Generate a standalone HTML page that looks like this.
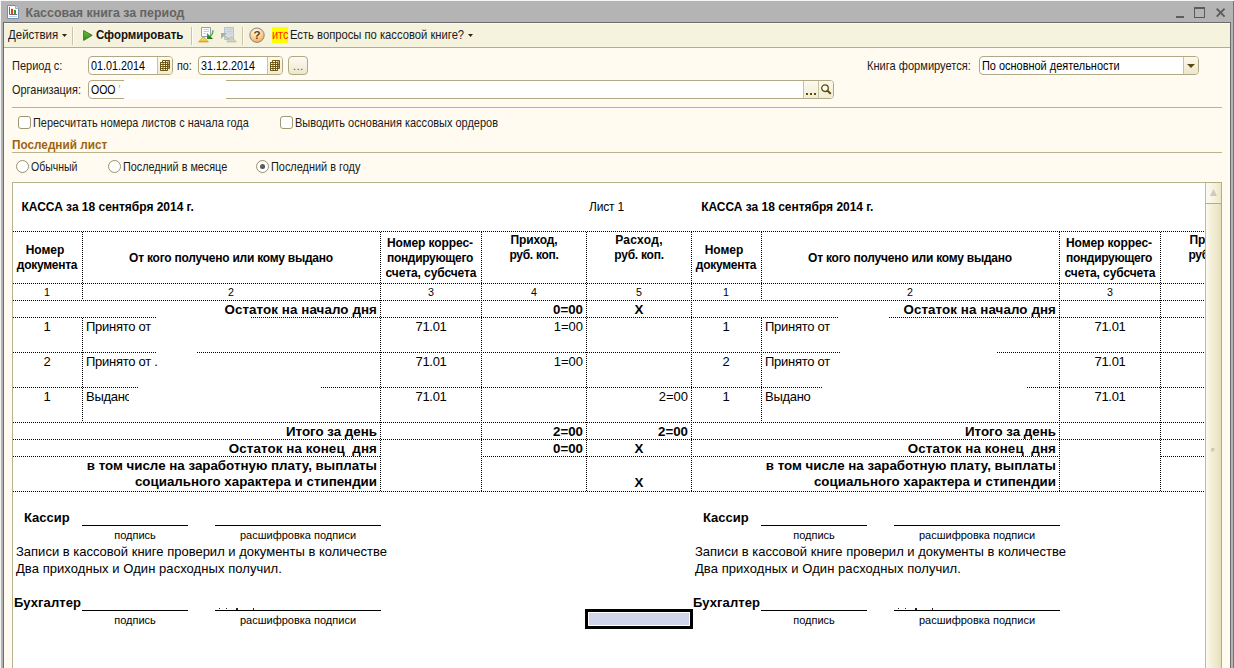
<!DOCTYPE html>
<html lang="ru">
<head>
<meta charset="utf-8">
<title>Кассовая книга за период</title>
<style>
html,body{margin:0;padding:0;}
body{width:1234px;height:668px;overflow:hidden;background:#b4b4b4;position:relative;font-family:"Liberation Sans",sans-serif;font-size:11px;color:#101010;}
.a{position:absolute;white-space:nowrap;line-height:1;}
.ui{font-size:11px;color:#1a1a1a;}
.b{font-weight:bold;}
#frameL{left:0;top:0;width:1px;height:668px;background:#f4f4f4;}
#frameT{left:0;top:0;width:1234px;height:1px;background:#f4f4f4;}
#client{left:3px;top:22px;width:1226px;height:660px;border:1px solid #6c6c6c;background:#fffbf0;}
#toolbar{left:4px;top:23px;width:1226px;height:24px;background:#f5f2dd;border-bottom:1px solid #b4ad85;box-shadow:inset 0 1px 0 #fbfaf0;}
.sep{width:1px;background:#c9c4a6;box-shadow:1px 0 0 #fffef6;}
.hl{height:1px;background:#b9b28e;}
.inp{background:#fff;border:1px solid #b0a983;border-radius:4px;box-sizing:border-box;}
.btn{background:linear-gradient(#fdfcf4,#ece7cb);border:1px solid #b0a983;border-radius:4px;box-sizing:border-box;}
.chk{width:13px;height:13px;box-sizing:border-box;border:1px solid #9f9870;border-radius:3px;background:#fff;}
.rad{width:13px;height:13px;box-sizing:border-box;border:1px solid #9a9369;border-radius:50%;background:#fff;}
#sheet{left:12px;top:182px;width:1193px;height:500px;background:#fff;border:1px solid #b9b28e;border-right:none;box-sizing:border-box;overflow:hidden;}
.sh{font-family:"Liberation Sans",sans-serif;color:#000;}
.dh{height:1px;background-image:repeating-linear-gradient(90deg,#000 0,#000 1px,transparent 1px,transparent 2px);}
.dv{width:1px;background-image:repeating-linear-gradient(180deg,#000 0,#000 1px,transparent 1px,transparent 2px);}
.c{text-align:center;}
.r{text-align:right;}
.sl{height:1px;background:#000;}
</style>
</head>
<body>
<!-- window frame -->
<div class="a" id="client"></div>
<div class="a" id="frameL"></div>
<div class="a" id="frameT"></div>
<!-- title bar -->
<svg class="a" style="left:7px;top:5px" width="12" height="14" viewBox="0 0 12 14">
<path d="M0.5 0.5H8.5L11.5 3.5V13.5H0.5Z" fill="#fff" stroke="#6f8fb0" stroke-width="1"/>
<path d="M8.5 0.5V3.5H11.5" fill="#dfeaf5" stroke="#8fb0d0" stroke-width="1"/>
<path d="M2.5 2V9.5H10" fill="none" stroke="#7a6a6a" stroke-width="1"/>
<rect x="4" y="3.8" width="2" height="5.2" fill="#ee3420"/>
<rect x="7" y="4.9" width="2" height="4.1" fill="#2f9e1e"/>
<rect x="2" y="11" width="8" height="1" fill="#b4d2ea"/>
</svg>
<div class="a b" id="t_title" style="left:25.5px;top:6px;font-size:12.4px;line-height:14px;color:#646464;letter-spacing:0px">Кассовая книга за период</div>
<div class="a" style="left:1176px;top:16px;width:8px;height:2px;background:#5e5e5e"></div>
<div class="a" style="left:1194px;top:7px;width:11px;height:11px;box-sizing:border-box;border:1px solid #5a5a5a;border-top-width:2px"></div>
<svg class="a" style="left:1215px;top:7px" width="11" height="11" viewBox="0 0 11 11"><path d="M1.7 1.7L9.6 9.6M9.6 1.7L1.7 9.6" stroke="#5c5c5c" stroke-width="1.9" fill="none"/></svg>
<div class="a" style="left:1231px;top:1px;width:3px;height:667px;background:#b4b4b4"></div>
<div class="a" style="left:1233px;top:1px;width:1px;height:667px;background:#747474"></div>

<!-- toolbar -->
<div class="a" id="toolbar"></div>
<div class="a ui" id="t_act" style="top:29px;line-height:13px;left:8.00px;font-size:12.4px;transform:scaleX(0.9245);transform-origin:0 0">Действия</div>
<svg class="a" style="left:62px;top:34px" width="5" height="3" viewBox="0 0 5 3"><path d="M0 0H5L2.5 3Z" fill="#33260a"/></svg>
<div class="a sep" style="left:72px;top:27px;height:18px"></div>
<svg class="a" style="left:83px;top:30px" width="10" height="11" viewBox="0 0 10 11"><defs><linearGradient id="pg" x1="0" y1="0" x2="0" y2="1"><stop offset="0" stop-color="#6cc22e"/><stop offset="1" stop-color="#2e8c1c"/></linearGradient></defs><path d="M0.6 0.6L9.2 5.3L0.6 10.4Z" fill="url(#pg)" stroke="#3c6e2a" stroke-width="0.9"/></svg>
<div class="a ui b" id="t_form" style="top:29px;line-height:13px;color:#111;left:96.08px;font-size:12.4px;transform:scaleX(0.9247);transform-origin:0 0">Сформировать</div>
<div class="a sep" style="left:191px;top:27px;height:18px"></div>
<svg class="a" style="left:198px;top:26px" width="17" height="18" viewBox="0 0 17 18">
<defs><linearGradient id="yg" x1="0" y1="0" x2="0" y2="1"><stop offset="0" stop-color="#e8b838"/><stop offset="0.6" stop-color="#f6e05c"/><stop offset="1" stop-color="#d89c1c"/></linearGradient>
<linearGradient id="gg" x1="0" y1="0" x2="1" y2="1"><stop offset="0" stop-color="#4fb030"/><stop offset="1" stop-color="#145c08"/></linearGradient></defs>
<path d="M3.5 1.5H12.5V10.5H3.5Z" fill="#fdfeff" stroke="#8aa2bc"/>
<path d="M5.5 3.5H11M5.5 5.5H11M5.5 7.5H8" stroke="#c3cfdf" stroke-width="1"/>
<path d="M12 10.5C14 9 15 7 15 4.2" fill="none" stroke="#58b43a" stroke-width="1.4"/>
<path d="M9 7V13H15Z" fill="url(#gg)"/>
<path d="M0.6 16L5.5 10.6L10.4 16Z" fill="url(#yg)" stroke="#d39a22" stroke-width="0.7"/>
</svg>
<svg class="a" style="left:220px;top:26px" width="18" height="18" viewBox="0 0 18 18">
<path d="M4.5 1.5H13.5V13.5H4.5Z" fill="#d7dbe3" stroke="#b3c3d1"/>
<path d="M6.5 3.5H12M6.5 5.5H12M9 7.5H12" stroke="#c2cedc" stroke-width="1"/>
<path d="M5 10C6 12 7.5 12.5 9.5 12.5" fill="none" stroke="#b4c2b0" stroke-width="1.3"/>
<path d="M1 7H7L1 13Z" fill="#a3b39f"/>
<path d="M6.7 16L11.5 10.4L16.3 16Z" fill="#d3cfbc" stroke="#bdb8a4" stroke-width="0.7"/>
</svg>
<div class="a sep" style="left:242px;top:27px;height:18px"></div>
<svg class="a" style="left:249px;top:27px" width="16" height="17" viewBox="0 0 16 17">
<defs><radialGradient id="hg" cx="0.42" cy="0.28" r="0.85"><stop offset="0" stop-color="#fff8ea"/><stop offset="0.45" stop-color="#fcd9a4"/><stop offset="0.85" stop-color="#f5a94c"/><stop offset="1" stop-color="#ee9a3a"/></radialGradient></defs>
<circle cx="8" cy="8.2" r="7.2" fill="url(#hg)" stroke="#8c8684" stroke-width="1"/>
<text x="8" y="12.4" text-anchor="middle" font-family="Liberation Sans, sans-serif" font-weight="bold" font-size="11.5" fill="#6a4018">?</text>
</svg>
<div class="a" style="left:272px;top:27px;width:16px;height:16px;background:#ffff00"></div>
<div class="a ui" id="t_its" style="top:29px;line-height:13px;color:#ff2a00;left:272.12px;font-size:12.4px;transform:scaleX(0.8824);transform-origin:0 0">итс</div>
<div class="a ui" id="t_q" style="top:29px;line-height:13px;left:290.09px;font-size:12.4px;transform:scaleX(0.9058);transform-origin:0 0">Есть вопросы по кассовой книге?</div>
<svg class="a" style="left:468px;top:34px" width="5" height="3" viewBox="0 0 5 3"><path d="M0 0H5L2.5 3Z" fill="#33260a"/></svg>

<!-- form -->
<div class="a ui" id="f_per" style="top:60px;line-height:13px;left:12.11px;font-size:12.4px;transform:scaleX(0.8889);transform-origin:0 0">Период с:</div>
<div class="a inp" style="left:88px;top:56px;width:85px;height:19px"></div>
<div class="a" style="left:157px;top:57px;width:14px;height:17px;background:linear-gradient(#fbf9ee,#f0ecd4);border-left:1px solid #c9c3a2;border-radius:0 3px 3px 0"></div>
<div class="a ui" id="f_d1" style="top:60px;line-height:13px;color:#000;left:91.00px;font-size:12.4px;transform:scaleX(0.8710);transform-origin:0 0">01.01.2014</div>
<svg class="a" style="left:160px;top:60px" width="10" height="11" viewBox="0 0 10 11"><path d="M2.5 0.5H9.5V8.5H2.5Z M0.5 2.5H7.5V10.5H0.5Z" fill="#fffdf0" stroke="#6e5714" stroke-width="1"/><path d="M0.5 2.5H7.5V10.5H0.5Z" fill="#fffdf0" stroke="#6e5714"/><path d="M1 4.5H9M1 6.5H9M1 8.5H7M3 3V10M5.5 1V10M8 1V8" stroke="#6e5714" stroke-width="1" fill="none"/></svg>
<div class="a ui" id="f_po" style="top:60px;line-height:13px;left:177.13px;font-size:12.4px;transform:scaleX(0.8667);transform-origin:0 0">по:</div>
<div class="a inp" style="left:198px;top:56px;width:85px;height:19px"></div>
<div class="a" style="left:267px;top:57px;width:14px;height:17px;background:linear-gradient(#fbf9ee,#f0ecd4);border-left:1px solid #c9c3a2;border-radius:0 3px 3px 0"></div>
<div class="a ui" id="f_d2" style="top:60px;line-height:13px;color:#000;left:201.13px;font-size:12.4px;transform:scaleX(0.8689);transform-origin:0 0">31.12.2014</div>
<svg class="a" style="left:270px;top:60px" width="10" height="11" viewBox="0 0 10 11"><path d="M2.5 0.5H9.5V8.5H2.5Z M0.5 2.5H7.5V10.5H0.5Z" fill="#fffdf0" stroke="#6e5714" stroke-width="1"/><path d="M0.5 2.5H7.5V10.5H0.5Z" fill="#fffdf0" stroke="#6e5714"/><path d="M1 4.5H9M1 6.5H9M1 8.5H7M3 3V10M5.5 1V10M8 1V8" stroke="#6e5714" stroke-width="1" fill="none"/></svg>
<div class="a btn" style="left:288px;top:56px;width:20px;height:19px"></div>
<div class="a ui" style="left:293px;top:60px;line-height:13px;color:#5a4a10;letter-spacing:0.6px">...</div>
<div class="a ui" id="f_org" style="top:84px;line-height:13px;left:12.12px;font-size:12.4px;transform:scaleX(0.8816);transform-origin:0 0">Организация:</div>
<div class="a inp" style="left:88px;top:80px;width:746px;height:19px"></div>
<div class="a" style="left:803px;top:81px;width:14px;height:17px;background:linear-gradient(#fbf9ee,#f0ecd4);border-left:1px solid #c9c3a2"></div>
<div class="a" style="left:818px;top:81px;width:14px;height:17px;background:linear-gradient(#fbf9ee,#f0ecd4);border-left:1px solid #c9c3a2;border-radius:0 3px 3px 0"></div>
<div class="a" style="left:806px;top:93px;width:2px;height:2px;background:#5a4a10;box-shadow:4px 0 0 #5a4a10,8px 0 0 #5a4a10"></div>
<svg class="a" style="left:820px;top:83px" width="13" height="13" viewBox="0 0 13 13"><circle cx="5" cy="5.2" r="3.3" fill="#fffdf2" stroke="#5e4a0e" stroke-width="1.3"/><path d="M7.4 7.6L10.2 10.3" stroke="#5e4a0e" stroke-width="2" stroke-linecap="round"/></svg>
<div class="a ui" id="f_ooo" style="top:84px;line-height:13px;color:#000;left:91.15px;font-size:12.4px;transform:scaleX(0.8485);transform-origin:0 0">ООО <span style="color:#e8a060">'</span></div>
<div class="a" style="left:124px;top:79px;width:102px;height:20px;background:#fff"></div>
<div class="a ui" id="f_kn" style="top:60px;line-height:13px;left:867.11px;font-size:12.4px;transform:scaleX(0.8947);transform-origin:0 0">Книга формируется:</div>
<div class="a inp" style="left:979px;top:56px;width:220px;height:19px"></div>
<div class="a" style="left:1183px;top:57px;width:14px;height:17px;background:linear-gradient(#fbf9ee,#ece7cb);border-left:1px solid #c9c3a2;border-radius:0 3px 3px 0"></div>
<svg class="a" style="left:1187px;top:64px" width="8" height="4" viewBox="0 0 8 4"><path d="M0 0H8L4 4Z" fill="#5a4a10"/></svg>
<div class="a ui" id="f_sel" style="top:60px;line-height:13px;color:#000;left:982.12px;font-size:12.4px;transform:scaleX(0.8831);transform-origin:0 0">По основной деятельности</div>
<div class="a hl" style="left:12px;top:107px;width:1210px"></div>
<div class="a chk" style="left:18px;top:116px"></div>
<div class="a ui" id="f_c1" style="top:117px;line-height:13px;left:33.12px;font-size:12.4px;transform:scaleX(0.8811);transform-origin:0 0">Пересчитать номера листов с начала года</div>
<div class="a chk" style="left:280px;top:116px"></div>
<div class="a ui" id="f_c2" style="top:117px;line-height:13px;left:295.11px;font-size:12.4px;transform:scaleX(0.8860);transform-origin:0 0">Выводить основания кассовых ордеров</div>
<div class="a ui b" id="f_last" style="top:139px;line-height:13px;color:#a0640f;left:12.05px;font-size:12.4px;transform:scaleX(0.9495);transform-origin:0 0">Последний лист</div>
<div class="a hl" style="left:12px;top:152px;width:1210px"></div>
<div class="a rad" style="left:16px;top:160px"></div>
<div class="a ui" id="f_r1" style="top:161px;line-height:13px;left:31.15px;font-size:12.4px;transform:scaleX(0.8491);transform-origin:0 0">Обычный</div>
<div class="a rad" style="left:108px;top:160px"></div>
<div class="a ui" id="f_r2" style="top:161px;line-height:13px;left:123.13px;font-size:12.4px;transform:scaleX(0.8729);transform-origin:0 0">Последний в месяце</div>
<div class="a rad" style="left:256px;top:160px"></div>
<div class="a" style="left:260px;top:164px;width:5px;height:5px;border-radius:50%;background:radial-gradient(circle at 40% 35%,#6a6a6a,#3c3c3c)"></div>
<div class="a ui" id="f_r3" style="top:161px;line-height:13px;left:271.12px;font-size:12.4px;transform:scaleX(0.8800);transform-origin:0 0">Последний в году</div>

<!-- SHEET:BEGIN -->
<!-- sheet -->
<div class="a" id="sheet">
<div class="a dh" style="left:0px;top:48px;width:1192px"></div>
<div class="a dh" style="left:0px;top:100px;width:1192px"></div>
<div class="a dh" style="left:0px;top:117px;width:1192px"></div>
<div class="a dh" style="left:0px;top:239px;width:1192px"></div>
<div class="a dh" style="left:0px;top:256px;width:1192px"></div>
<div class="a dh" style="left:0px;top:308px;width:1192px"></div>
<div class="a dh" style="left:0px;top:273px;width:367px"></div>
<div class="a dh" style="left:468px;top:273px;width:578px"></div>
<div class="a dh" style="left:1148px;top:273px;width:44px"></div>
<div class="a dh" style="left:0px;top:134px;width:143px"></div>
<div class="a dh" style="left:238px;top:134px;width:587px"></div>
<div class="a dh" style="left:876px;top:134px;width:316px"></div>
<div class="a dh" style="left:0px;top:169px;width:143px"></div>
<div class="a dh" style="left:184px;top:169px;width:643px"></div>
<div class="a dh" style="left:984px;top:169px;width:208px"></div>
<div class="a dh" style="left:0px;top:204px;width:125px"></div>
<div class="a dh" style="left:308px;top:204px;width:501px"></div>
<div class="a dh" style="left:1014px;top:204px;width:178px"></div>
<div class="a dv" style="left:367px;top:49px;height:259px"></div>
<div class="a dv" style="left:468px;top:49px;height:259px"></div>
<div class="a dv" style="left:573px;top:49px;height:259px"></div>
<div class="a dv" style="left:678px;top:49px;height:259px"></div>
<div class="a dv" style="left:1046px;top:49px;height:259px"></div>
<div class="a dv" style="left:1147px;top:49px;height:259px"></div>
<div class="a dv" style="left:69px;top:49px;height:68px"></div>
<div class="a dv" style="left:69px;top:135px;height:104px"></div>
<div class="a dv" style="left:748px;top:49px;height:68px"></div>
<div class="a dv" style="left:748px;top:135px;height:104px"></div>
<div class="a sh" id="s0_kassa" style="top:17px;font-size:12px;line-height:14px;font-weight:bold;letter-spacing:-0.02px;left:8.5px;">КАССА за 18 сентября 2014 г.</div>
<div class="a sh" id="s0_h1a" style="top:60px;font-size:12px;line-height:14px;font-weight:bold;left:-118px;width:300px;text-align:center;">Номер</div>
<div class="a sh" id="s0_h1b" style="top:75px;font-size:12px;line-height:14px;font-weight:bold;letter-spacing:-0.28px;left:-116px;width:300px;text-align:center;">документа</div>
<div class="a sh" id="s0_h2" style="top:68px;font-size:12px;line-height:14px;font-weight:bold;letter-spacing:-0.23px;left:68px;width:300px;text-align:center;">От кого получено или кому выдано</div>
<div class="a sh" id="s0_h3a" style="top:53px;font-size:12px;line-height:14px;font-weight:bold;letter-spacing:-0.08px;left:267px;width:300px;text-align:center;">Номер коррес-</div>
<div class="a sh" id="s0_h3b" style="top:68px;font-size:12px;line-height:14px;font-weight:bold;letter-spacing:-0.33px;left:267px;width:300px;text-align:center;">пондирующего</div>
<div class="a sh" id="s0_h3c" style="top:83px;font-size:12px;line-height:14px;font-weight:bold;letter-spacing:-0.08px;left:268px;width:300px;text-align:center;">счета, субсчета</div>
<div class="a sh" id="s0_h4a" style="top:50px;font-size:12px;line-height:14px;font-weight:bold;letter-spacing:-0.1px;left:371px;width:300px;text-align:center;">Приход,</div>
<div class="a sh" id="s0_h4b" style="top:65px;font-size:12px;line-height:14px;font-weight:bold;letter-spacing:-0.3px;left:371px;width:300px;text-align:center;">руб. коп.</div>
<div class="a sh" id="s0_h5a" style="top:50px;font-size:12px;line-height:14px;font-weight:bold;letter-spacing:0.3px;left:476px;width:300px;text-align:center;">Расход,</div>
<div class="a sh" id="s0_h5b" style="top:65px;font-size:12px;line-height:14px;font-weight:bold;letter-spacing:-0.25px;left:476px;width:300px;text-align:center;">руб. коп.</div>
<div class="a sh" id="s0_n0" style="top:103px;font-size:10.67px;line-height:12px;left:-116px;width:300px;text-align:center;">1</div>
<div class="a sh" id="s0_n1" style="top:103px;font-size:10.67px;line-height:12px;left:68px;width:300px;text-align:center;">2</div>
<div class="a sh" id="s0_n2" style="top:103px;font-size:10.67px;line-height:12px;left:268px;width:300px;text-align:center;">3</div>
<div class="a sh" id="s0_n3" style="top:103px;font-size:10.67px;line-height:12px;left:371px;width:300px;text-align:center;">4</div>
<div class="a sh" id="s0_n4" style="top:103px;font-size:10.67px;line-height:12px;left:476px;width:300px;text-align:center;">5</div>
<div class="a sh" id="s0_ost" style="top:119px;font-size:13.33px;line-height:15px;font-weight:bold;letter-spacing:0.1px;right:828px;">Остаток на начало дня</div>
<div class="a sh" id="s0_r0n" style="top:136px;font-size:13px;line-height:15px;left:-116px;width:300px;text-align:center;">1</div>
<div class="a sh" id="s0_r0t" style="top:136px;font-size:13px;line-height:15px;letter-spacing:-0.28px;left:73px;">Принято от</div>
<div class="a sh" id="s0_r0a" style="top:136px;font-size:13px;line-height:15px;letter-spacing:-0.3px;left:268px;width:300px;text-align:center;">71.01</div>
<div class="a sh" id="s0_r1n" style="top:171px;font-size:13px;line-height:15px;left:-116px;width:300px;text-align:center;">2</div>
<div class="a sh" id="s0_r1t" style="top:171px;font-size:13px;line-height:15px;letter-spacing:-0.28px;left:73px;">Принято от .</div>
<div class="a sh" id="s0_r1a" style="top:171px;font-size:13px;line-height:15px;letter-spacing:-0.3px;left:268px;width:300px;text-align:center;">71.01</div>
<div class="a sh" id="s0_r2n" style="top:206px;font-size:13px;line-height:15px;left:-116px;width:300px;text-align:center;">1</div>
<div class="a sh" id="s0_r2t" style="top:206px;font-size:13px;line-height:15px;letter-spacing:-0.28px;left:73px;">Выдано</div>
<div class="a sh" id="s0_r2a" style="top:206px;font-size:13px;line-height:15px;letter-spacing:-0.3px;left:268px;width:300px;text-align:center;">71.01</div>
<div class="a sh" id="s0_itog" style="top:241px;font-size:13.33px;line-height:15px;font-weight:bold;right:828px;">Итого за день</div>
<div class="a sh" id="s0_ostk" style="top:258px;font-size:13.33px;line-height:15px;font-weight:bold;letter-spacing:0.12px;right:828px;">Остаток на конец&nbsp; дня</div>
<div class="a sh" id="s0_vt1" style="top:275px;font-size:13.33px;line-height:15px;font-weight:bold;right:828px;">в том числе на заработную плату, выплаты</div>
<div class="a sh" id="s0_vt2" style="top:291px;font-size:13.33px;line-height:15px;font-weight:bold;right:828px;">социального характера и стипендии</div>
<div class="a sh" id="s0_kas" style="top:327px;font-size:13px;line-height:15px;font-weight:bold;left:11px;">Кассир</div>
<div class="a sl" style="left:69px;top:342px;width:106px"></div>
<div class="a sl" style="left:202px;top:342px;width:166px"></div>
<div class="a sh" id="s0_pod1" style="top:346px;font-size:11px;line-height:13px;left:-28px;width:300px;text-align:center;">подпись</div>
<div class="a sh" id="s0_ras1" style="top:346px;font-size:11px;line-height:13px;left:135px;width:300px;text-align:center;">расшифровка подписи</div>
<div class="a sh" id="s0_zap" style="top:361px;font-size:13px;line-height:15px;left:3px;">Записи в кассовой книге проверил и документы в количестве</div>
<div class="a sh" id="s0_dva" style="top:378px;font-size:13px;line-height:15px;letter-spacing:0.06px;left:3px;">Два приходных и Один расходных получил.</div>
<div class="a sh" id="s0_buh" style="top:412px;font-size:13px;line-height:15px;font-weight:bold;letter-spacing:0.1px;left:1px;">Бухгалтер</div>
<div class="a sl" style="left:69px;top:427px;width:106px"></div>
<div class="a sl" style="left:202px;top:427px;width:166px"></div>
<div class="a sh" id="s0_pod2" style="top:431px;font-size:11px;line-height:13px;left:-28px;width:300px;text-align:center;">подпись</div>
<div class="a sh" id="s0_ras2" style="top:431px;font-size:11px;line-height:13px;left:135px;width:300px;text-align:center;">расшифровка подписи</div>
<div class="a sh" id="s1_kassa" style="top:17px;font-size:12px;line-height:14px;font-weight:bold;letter-spacing:-0.02px;left:688.2px;">КАССА за 18 сентября 2014 г.</div>
<div class="a sh" id="s1_h1a" style="top:60px;font-size:12px;line-height:14px;font-weight:bold;left:561px;width:300px;text-align:center;">Номер</div>
<div class="a sh" id="s1_h1b" style="top:75px;font-size:12px;line-height:14px;font-weight:bold;letter-spacing:-0.28px;left:563px;width:300px;text-align:center;">документа</div>
<div class="a sh" id="s1_h2" style="top:68px;font-size:12px;line-height:14px;font-weight:bold;letter-spacing:-0.23px;left:747px;width:300px;text-align:center;">От кого получено или кому выдано</div>
<div class="a sh" id="s1_h3a" style="top:53px;font-size:12px;line-height:14px;font-weight:bold;letter-spacing:-0.08px;left:946px;width:300px;text-align:center;">Номер коррес-</div>
<div class="a sh" id="s1_h3b" style="top:68px;font-size:12px;line-height:14px;font-weight:bold;letter-spacing:-0.33px;left:946px;width:300px;text-align:center;">пондирующего</div>
<div class="a sh" id="s1_h3c" style="top:83px;font-size:12px;line-height:14px;font-weight:bold;letter-spacing:-0.08px;left:947px;width:300px;text-align:center;">счета, субсчета</div>
<div class="a sh" id="s1_h4a" style="top:50px;font-size:12px;line-height:14px;font-weight:bold;letter-spacing:-0.1px;left:1050px;width:300px;text-align:center;">Приход,</div>
<div class="a sh" id="s1_h4b" style="top:65px;font-size:12px;line-height:14px;font-weight:bold;letter-spacing:-0.3px;left:1050px;width:300px;text-align:center;">руб. коп.</div>
<div class="a sh" id="s1_n0" style="top:103px;font-size:10.67px;line-height:12px;left:563px;width:300px;text-align:center;">1</div>
<div class="a sh" id="s1_n1" style="top:103px;font-size:10.67px;line-height:12px;left:747px;width:300px;text-align:center;">2</div>
<div class="a sh" id="s1_n2" style="top:103px;font-size:10.67px;line-height:12px;left:947px;width:300px;text-align:center;">3</div>
<div class="a sh" id="s1_n3" style="top:103px;font-size:10.67px;line-height:12px;left:1050px;width:300px;text-align:center;">4</div>
<div class="a sh" id="s1_ost" style="top:119px;font-size:13.33px;line-height:15px;font-weight:bold;letter-spacing:0.1px;right:149px;">Остаток на начало дня</div>
<div class="a sh" id="s1_r0n" style="top:136px;font-size:13px;line-height:15px;left:563px;width:300px;text-align:center;">1</div>
<div class="a sh" id="s1_r0t" style="top:136px;font-size:13px;line-height:15px;letter-spacing:-0.28px;left:752px;">Принято от</div>
<div class="a sh" id="s1_r0a" style="top:136px;font-size:13px;line-height:15px;letter-spacing:-0.3px;left:947px;width:300px;text-align:center;">71.01</div>
<div class="a sh" id="s1_r1n" style="top:171px;font-size:13px;line-height:15px;left:563px;width:300px;text-align:center;">2</div>
<div class="a sh" id="s1_r1t" style="top:171px;font-size:13px;line-height:15px;letter-spacing:-0.28px;left:752px;">Принято от</div>
<div class="a sh" id="s1_r1a" style="top:171px;font-size:13px;line-height:15px;letter-spacing:-0.3px;left:947px;width:300px;text-align:center;">71.01</div>
<div class="a sh" id="s1_r2n" style="top:206px;font-size:13px;line-height:15px;left:563px;width:300px;text-align:center;">1</div>
<div class="a sh" id="s1_r2t" style="top:206px;font-size:13px;line-height:15px;letter-spacing:-0.28px;left:752px;">Выдано</div>
<div class="a sh" id="s1_r2a" style="top:206px;font-size:13px;line-height:15px;letter-spacing:-0.3px;left:947px;width:300px;text-align:center;">71.01</div>
<div class="a sh" id="s1_itog" style="top:241px;font-size:13.33px;line-height:15px;font-weight:bold;right:149px;">Итого за день</div>
<div class="a sh" id="s1_ostk" style="top:258px;font-size:13.33px;line-height:15px;font-weight:bold;letter-spacing:0.12px;right:149px;">Остаток на конец&nbsp; дня</div>
<div class="a sh" id="s1_vt1" style="top:275px;font-size:13.33px;line-height:15px;font-weight:bold;right:149px;">в том числе на заработную плату, выплаты</div>
<div class="a sh" id="s1_vt2" style="top:291px;font-size:13.33px;line-height:15px;font-weight:bold;right:149px;">социального характера и стипендии</div>
<div class="a sh" id="s1_kas" style="top:327px;font-size:13px;line-height:15px;font-weight:bold;left:690px;">Кассир</div>
<div class="a sl" style="left:748px;top:342px;width:106px"></div>
<div class="a sl" style="left:881px;top:342px;width:166px"></div>
<div class="a sh" id="s1_pod1" style="top:346px;font-size:11px;line-height:13px;left:651px;width:300px;text-align:center;">подпись</div>
<div class="a sh" id="s1_ras1" style="top:346px;font-size:11px;line-height:13px;left:814px;width:300px;text-align:center;">расшифровка подписи</div>
<div class="a sh" id="s1_zap" style="top:361px;font-size:13px;line-height:15px;left:682px;">Записи в кассовой книге проверил и документы в количестве</div>
<div class="a sh" id="s1_dva" style="top:378px;font-size:13px;line-height:15px;letter-spacing:0.06px;left:682px;">Два приходных и Один расходных получил.</div>
<div class="a sh" id="s1_buh" style="top:412px;font-size:13px;line-height:15px;font-weight:bold;letter-spacing:0.1px;left:680px;">Бухгалтер</div>
<div class="a sl" style="left:748px;top:427px;width:106px"></div>
<div class="a sl" style="left:881px;top:427px;width:166px"></div>
<div class="a sh" id="s1_pod2" style="top:431px;font-size:11px;line-height:13px;left:651px;width:300px;text-align:center;">подпись</div>
<div class="a sh" id="s1_ras2" style="top:431px;font-size:11px;line-height:13px;left:814px;width:300px;text-align:center;">расшифровка подписи</div>
<div class="a sh" id="v_lst" style="top:17px;font-size:12px;line-height:14px;letter-spacing:-0.2px;left:576px;">Лист 1</div>
<div class="a sh" id="v_000" style="top:119px;font-size:13.33px;line-height:15px;font-weight:bold;right:622px;">0=00</div>
<div class="a sh" id="v_x1" style="top:119px;font-size:13.33px;line-height:15px;font-weight:bold;left:476px;width:300px;text-align:center;">X</div>
<div class="a sh" id="v_100a" style="top:136px;font-size:13px;line-height:15px;right:622px;">1=00</div>
<div class="a sh" id="v_100b" style="top:171px;font-size:13px;line-height:15px;right:622px;">1=00</div>
<div class="a sh" id="v_200a" style="top:206px;font-size:13px;line-height:15px;right:517px;">2=00</div>
<div class="a sh" id="v_200b" style="top:241px;font-size:13.33px;line-height:15px;font-weight:bold;right:622px;">2=00</div>
<div class="a sh" id="v_200c" style="top:241px;font-size:13.33px;line-height:15px;font-weight:bold;right:517px;">2=00</div>
<div class="a sh" id="v_000b" style="top:258px;font-size:13.33px;line-height:15px;font-weight:bold;right:622px;">0=00</div>
<div class="a sh" id="v_x2" style="top:258px;font-size:13.33px;line-height:15px;font-weight:bold;left:476px;width:300px;text-align:center;">X</div>
<div class="a sh" id="v_x3" style="top:292px;font-size:13.33px;line-height:15px;font-weight:bold;left:476px;width:300px;text-align:center;">X</div>
<div class="a" style="left:116px;top:207px;width:191px;height:25px;background:#fff"></div>
<div class="a" style="left:206px;top:425px;width:1px;height:1px;background:#222"></div>
<div class="a" style="left:213px;top:425px;width:1px;height:1px;background:#222"></div>
<div class="a" style="left:223px;top:425px;width:2px;height:2px;background:#222"></div>
<div class="a" style="left:240px;top:425px;width:1px;height:2px;background:#222"></div>
<div class="a" style="left:885px;top:425px;width:1px;height:1px;background:#222"></div>
<div class="a" style="left:892px;top:425px;width:1px;height:1px;background:#222"></div>
<div class="a" style="left:902px;top:425px;width:2px;height:2px;background:#222"></div>
<div class="a" style="left:919px;top:425px;width:1px;height:2px;background:#222"></div>
<div class="a" style="left:572px;top:426px;width:108px;height:20px;box-sizing:border-box;border:3px solid #000;background:#d1d5ec;box-shadow:inset 0 0 0 1px #fff"></div>
</div>
<div class="a" id="vsb" style="left:1205px;top:182px;width:17px;height:500px;box-sizing:border-box;border:1px solid #b5ad85;border-left-color:#c0ba9c;background:linear-gradient(90deg,#fcfbf2,#f4efd8 35%,#efe9cb 70%,#e5deb8)"></div>
<div class="a" style="left:1205px;top:182px;width:17px;height:22px;box-sizing:border-box;border:1px solid #b5ad85;border-left-color:#c0ba9c;background:linear-gradient(90deg,#fdfcf4,#f6f2de 50%,#ece6c8)"></div>
<svg class="a" style="left:1209px;top:188px" width="9" height="9" viewBox="0 0 9 9"><path d="M4.5 1L8 8H1Z" fill="#cdc9bb"/></svg>
<div class="a" style="left:1211px;top:448px;width:4px;height:4px;border-radius:50%;background:#dcd7c0;box-shadow:inset 1px 1px 0 #c6c1a8"></div>
<!-- SHEET:END -->
</body>
</html>
